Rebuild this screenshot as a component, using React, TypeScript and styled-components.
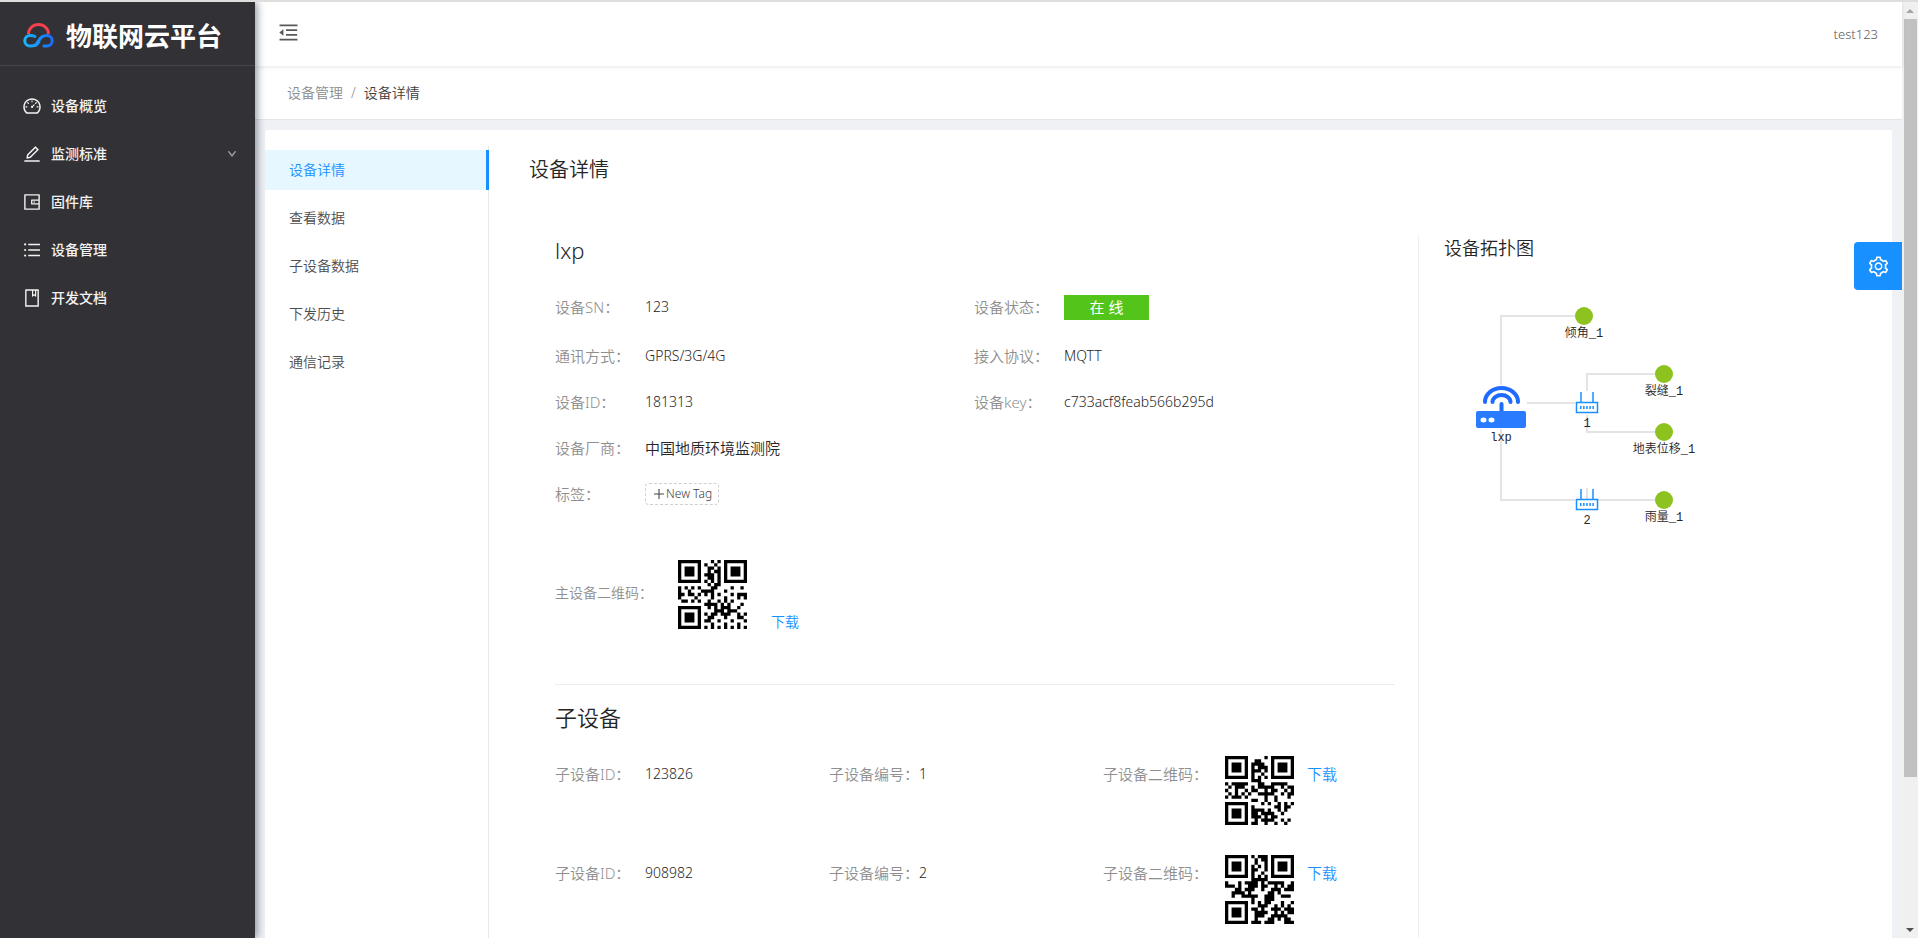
import React from 'react';
import styled, { createGlobalStyle } from 'styled-components';
import {
  AiOutlineBook,
  AiOutlineDashboard,
  AiOutlineDown,
  AiOutlineEdit,
  AiOutlineMenuFold,
  AiOutlinePlus,
  AiOutlineSetting,
  AiOutlineUnorderedList,
  AiOutlineWallet,
} from 'react-icons/ai';

const GlobalStyle = createGlobalStyle`
  *, *::before, *::after { box-sizing: border-box; }
  body {
    margin: 0;
    background: #f0f1f5;
    color: #262626;
    font-family: "Noto Sans", "Noto Sans CJK SC", sans-serif;
    font-size: 14px;
    font-weight: 350;
    line-height: 22px;
  }
  h1, h2, h3, p, ul, dl, dd, dt { margin: 0; padding: 0; font-weight: inherit; }
  ul { list-style: none; }
  a { text-decoration: none; color: inherit; }
  button { font: inherit; cursor: pointer; }
  svg { display: block; flex: none; }
`;

/* ---------- QR code (version 1, level M, numeric content) ---------- */

const SIZE = 21;
const DATA_WORDS = 16;
const EC_WORDS = 10;

const masks: Record<number, (r: number, c: number) => boolean> = {
  0: (r, c) => (r + c) % 2 === 0,
  2: (_r, c) => c % 3 === 0,
  4: (r, c) => (Math.floor(r / 2) + Math.floor(c / 3)) % 2 === 0,
};

const formats: Record<number, string> = {
  0: '101010000010010',
  2: '101111001111100',
  4: '100010111111001',
};

function gfMul(a: number, b: number) {
  let p = 0;
  while (b) {
    if (b & 1) p ^= a;
    a <<= 1;
    if (a & 256) a ^= 0x11d;
    b >>= 1;
  }
  return p;
}

function errorWords(data: number[]) {
  let gen = [1];
  let root = 1;
  for (let i = 0; i < EC_WORDS; i++) {
    const next = [...gen, 0];
    gen.forEach((g, j) => {
      next[j + 1] ^= gfMul(g, root);
    });
    gen = next;
    root = gfMul(root, 2);
  }
  const rem = [...data, ...Array(EC_WORDS).fill(0)];
  for (let i = 0; i < data.length; i++) {
    const f = rem[i];
    gen.forEach((g, j) => {
      rem[i + j] ^= gfMul(g, f);
    });
  }
  return rem.slice(data.length);
}

function qrMatrix(value: string, mask: number) {
  const bin = (n: number, len: number) => n.toString(2).padStart(len, '0');
  let bits = '0001' + bin(value.length, 10);
  for (let i = 0; i < value.length; i += 3) {
    const part = value.slice(i, i + 3);
    bits += bin(Number(part), part.length * 3 + 1);
  }
  bits += '0000';
  bits = bits.padEnd(Math.ceil(bits.length / 8) * 8, '0');
  const words = bits.match(/.{8}/g)!.map((b) => parseInt(b, 2));
  for (let pad = 0; words.length < DATA_WORDS; pad++) words.push(pad % 2 ? 0x11 : 0xec);
  const stream = [...words, ...errorWords(words)].map((w) => bin(w, 8)).join('');

  const m: (number | null)[][] = Array.from({ length: SIZE }, () => Array(SIZE).fill(null));
  const finder = (r0: number, c0: number) => {
    for (let r = -1; r < 8; r++)
      for (let c = -1; c < 8; c++) {
        if (m[r0 + r] === undefined || m[r0 + r][c0 + c] === undefined) continue;
        const d = Math.max(Math.abs(r - 3), Math.abs(c - 3));
        m[r0 + r][c0 + c] = d === 2 || d === 4 ? 0 : 1;
      }
  };
  finder(0, 0);
  finder(0, SIZE - 7);
  finder(SIZE - 7, 0);
  for (let i = 8; i < SIZE - 8; i++) m[6][i] = m[i][6] = i % 2 ? 0 : 1;

  const f = formats[mask].split('').map(Number);
  const around = [[8, 0], [8, 1], [8, 2], [8, 3], [8, 4], [8, 5], [8, 7], [8, 8], [7, 8], [5, 8], [4, 8], [3, 8], [2, 8], [1, 8], [0, 8]];
  around.forEach(([r, c], i) => (m[r][c] = f[i]));
  for (let i = 0; i < 7; i++) m[SIZE - 1 - i][8] = f[i];
  for (let i = 7; i < 15; i++) m[8][SIZE - 15 + i] = f[i];
  m[SIZE - 8][8] = 1;

  let k = 0;
  let up = true;
  for (let right = SIZE - 1; right > 0; right -= 2) {
    if (right === 6) right = 5;
    for (let n = 0; n < SIZE; n++) {
      const r = up ? SIZE - 1 - n : n;
      for (const c of [right, right - 1]) {
        if (m[r][c] !== null) continue;
        const bit = Number(stream[k++] ?? 0);
        m[r][c] = masks[mask](r, c) ? bit ^ 1 : bit;
      }
    }
    up = !up;
  }
  return m;
}

const QrSvg = styled.svg`
  width: 69px;
  height: 69px;
`;

function QrCode({ value, mask }: { value: string; mask: number }) {
  let d = '';
  qrMatrix(value, mask).forEach((row, r) => {
    for (let c = 0; c < SIZE; c++) {
      if (!row[c]) continue;
      const start = c;
      while (row[c + 1]) c++;
      d += `M${start} ${r}h${c - start + 1}v1h-${c - start + 1}z`;
    }
  });
  return (
    <QrSvg viewBox="0 0 21 21" role="img" aria-label={`二维码 ${value}`}>
      <path d={d} />
    </QrSvg>
  );
}

/* ---------- Frame ---------- */

const Frame = styled.div`
  display: flex;
  height: 100vh;
  overflow: hidden;
  border-top: 2px solid #dedede;
`;

const Sidebar = styled.aside`
  flex: none;
  width: 255px;
  background: #323135;
  box-shadow: 2px 0 8px rgba(0, 21, 41, 0.45);
  z-index: 2;
`;

const Brand = styled.h1`
  display: flex;
  align-items: center;
  gap: 11px;
  height: 64px;
  padding: 4px 0 0 22px;
  border-bottom: 1px solid #47464b;
  color: #fff;
  font-size: 26px;
  font-weight: 700;
  line-height: 40px;
`;

const SideMenu = styled.ul`
  padding-top: 20px;
`;

const SideLink = styled.a`
  display: flex;
  align-items: center;
  gap: 9px;
  height: 40px;
  margin-bottom: 8px;
  padding: 0 18px 0 22px;
  color: #f2f2f2;
  font-weight: 500;

  span { flex: 1; }
`;

const Main = styled.main`
  display: flex;
  flex: 1;
  flex-direction: column;
  min-width: 0;
`;

const Header = styled.header`
  display: flex;
  flex: none;
  align-items: center;
  justify-content: space-between;
  height: 64px;
  padding: 0 24px 0 22px;
  background: #fff;
  box-shadow: 0 1px 4px rgba(0, 21, 41, 0.1);
  z-index: 1;
`;

const FoldButton = styled.button`
  padding: 0 0 4px;
  border: 0;
  background: none;
  color: #595959;
`;

const UserName = styled.span`
  color: #595959;
  font-size: 13px;
`;

const Breadcrumb = styled.nav`
  display: flex;
  flex: none;
  align-items: center;
  gap: 8px;
  height: 54px;
  padding-left: 32px;
  border-bottom: 1px solid #e4e5e8;
  background: #fff;
  color: #8c8c8c;
`;

const Current = styled.span`
  color: #404040;
`;

const Card = styled.section`
  display: flex;
  flex: 1;
  min-height: 0;
  margin: 10px 10px 0;
  padding-top: 16px;
  border-radius: 2px 2px 0 0;
  background: #fff;
`;

const Tabs = styled.ul`
  flex: none;
  width: 224px;
  padding-top: 4px;
  border-right: 1px solid #e8e8e8;
`;

const TabLink = styled.a<{ $active?: boolean }>`
  display: flex;
  align-items: center;
  height: 40px;
  margin: 0 -1px 8px 0;
  padding-left: 24px;
  border-right: ${(p) => (p.$active ? '3px solid #1890ff' : '0')};
  background: ${(p) => (p.$active ? '#e6f7ff' : 'transparent')};
  color: ${(p) => (p.$active ? '#1890ff' : '#4d4d4d')};
`;

const Content = styled.div`
  flex: 1;
  min-width: 0;
  padding: 8px 0 0 40px;
`;

const PageTitle = styled.h2`
  font-size: 20px;
  line-height: 32px;
`;

const Columns = styled.div`
  display: flex;
  margin-top: 49px;
`;

const Details = styled.div`
  flex: 1;
  padding-left: 26px;
`;

const Topology = styled.div`
  flex: none;
  width: 474px;
  height: 800px;
  margin-left: 23px;
  padding-left: 25px;
  border-left: 1px solid #f0f0f0;
`;

const TopologyTitle = styled.h3`
  font-size: 18px;
  line-height: 26px;
`;

const BlockTitle = styled.h3`
  font-size: 22px;
  line-height: 30px;
`;

const Facts = styled.dl`
  display: grid;
  grid-template-columns: 1fr 1fr;
  grid-template-rows: 50px 47px;
  grid-auto-rows: 46px;
  margin: 17px 2px 0 0;
  font-size: 15px;
`;

const Fact = styled.div<{ $wide?: boolean }>`
  display: flex;
  align-items: center;
  grid-column: ${(p) => (p.$wide ? '1 / -1' : 'auto')};
`;

const Label = styled.dt<{ $width?: number }>`
  flex: none;
  width: ${(p) => p.$width ?? 90}px;
  color: #8f8f8f;
`;

const Value = styled.dd<{ $latin?: boolean }>`
  font-size: ${(p) => (p.$latin ? 14 : 15)}px;
`;

const Online = styled.dd`
  width: 85px;
  height: 25px;
  background: #52c41a;
  color: #fff;
  font-weight: 400;
  line-height: 25px;
  text-align: center;
`;

const NewTag = styled.button`
  display: flex;
  align-items: center;
  height: 22px;
  padding: 0 6px;
  border: 1px dashed #d0d0d0;
  border-radius: 4px;
  background: #fff;
  color: #404040;
  font-size: 12px;
`;

const MainQr = styled.div`
  display: flex;
  align-items: center;
  height: 69px;
  margin-top: 43px;
`;

const MainQrLabel = styled.span`
  width: 123px;
  padding-bottom: 4px;
  color: #8f8f8f;
`;

const Download = styled.a<{ $low?: boolean }>`
  align-self: ${(p) => (p.$low ? 'flex-end' : 'flex-start')};
  margin-left: ${(p) => (p.$low ? 24 : 13)}px;
  padding-top: ${(p) => (p.$low ? 0 : 7)}px;
  color: #1890ff;
  line-height: ${(p) => (p.$low ? 14 : 22)}px;
`;

const Divider = styled.hr`
  height: 1px;
  margin: 55px 0 17px;
  border: 0;
  background: #ececec;
`;

const SubDevice = styled.dl`
  display: grid;
  grid-template-columns: 274fr 274fr 290fr;
  height: 69px;
  margin: 24px 2px 30px 0;
  font-size: 15px;
`;

const SubFact = styled.div`
  display: flex;
  align-items: flex-start;
  padding-top: 7px;
`;

const SubQr = styled.div`
  display: flex;

  dt { padding-top: 7px; }
  dd { display: flex; }
`;

/* ---------- Scroll bar and settings ---------- */

const ScrollTrack = styled.div`
  display: flex;
  flex: none;
  flex-direction: column;
  align-items: center;
  width: 16px;
  background: #f0f0f0;
`;

const ScrollRail = styled.div`
  flex: 1;
  width: 13px;
`;

const ScrollThumb = styled.div`
  height: 84%;
  background: #c1c1c1;
`;

const ScrollArrow = styled.div<{ $down?: boolean }>`
  display: flex;
  align-items: center;
  height: 17px;
  color: ${(p) => (p.$down ? '#505050' : '#a3a3a3')};
`;

const SettingsButton = styled.button`
  position: fixed;
  top: 242px;
  right: 16px;
  z-index: 3;
  display: flex;
  align-items: center;
  justify-content: center;
  width: 48px;
  height: 48px;
  padding: 0;
  border: 0;
  border-radius: 4px 0 0 4px;
  background: #1890ff;
  color: #fff;
`;

/* ---------- Drawings ---------- */

function CloudLogo() {
  return (
    <svg width="33" height="25" viewBox="0 0 33 25" fill="none" strokeWidth="3" strokeLinecap="round">
      <defs>
        <linearGradient id="cloudBlue" x1="0" x2="1">
          <stop offset="0" stopColor="#19b5fe" />
          <stop offset="1" stopColor="#1a6dff" />
        </linearGradient>
      </defs>
      <path d="M6.500 11a10 9.500 0 0 1 20 0" stroke="#f5424e" strokeLinecap="butt" />
      <path
        d="M13 13.500C11.500 12.500 10 12.500 8 12.500a5.200 5.200 0 0 0 0 10.500c5 0 6.500-1 8.500-5s4-5.500 8.500-5.500a5.200 5.200 0 0 1 0 10.500h-3M13.500 22.500c2-1 2.500-2 3.500-4"
        stroke="url(#cloudBlue)"
      />
    </svg>
  );
}

const TopologySvg = styled.svg`
  margin: 40px 0 0 21px;
  overflow: visible;

  text {
    fill: #262626;
    font-family: "Liberation Mono", "Noto Sans CJK SC", monospace;
    font-size: 12px;
    text-anchor: middle;
  }
`;

const sensors = [
  { x: 119, y: 15, name: '倾角_1' },
  { x: 199, y: 73, name: '裂缝_1' },
  { x: 199, y: 131, name: '地表位移_1' },
  { x: 199, y: 199, name: '雨量_1' },
];

const hubs = [
  { x: 122, y: 91, name: '1' },
  { x: 122, y: 188, name: '2' },
];

function TopologyMap() {
  return (
    <TopologySvg width="240" height="230" viewBox="0 0 240 230">
      <path
        d="M36 84V15H110M36 128V199H110M62 102H110M122 90V73H190M122 114V131H190M122 187V199M133 199H190"
        fill="none"
        stroke="#e4e4e4"
        strokeWidth="2"
      />
      <g stroke="#1f6bff" fill="none" strokeWidth="4" strokeLinecap="round">
        <path d="M20 101a16.500 14 0 0 1 33 0" />
        <path d="M27.500 101a9 7 0 0 1 18 0" />
        <path d="M36.500 103v9" />
      </g>
      <rect x="11" y="110" width="50" height="17" rx="2" fill="#2a7bff" />
      <ellipse cx="18.500" cy="119" rx="3" ry="2.500" fill="#fff" />
      <ellipse cx="26.500" cy="119" rx="3" ry="2.500" fill="#fff" />
      <text x="36" y="140">lxp</text>
      {hubs.map((h) => (
        <g key={h.name}>
          <path d={`M${h.x - 6} ${h.y}v11M${h.x + 6} ${h.y}v11`} stroke="#1890ff" strokeWidth="1.500" />
          <rect x={h.x - 10.5} y={h.y + 10.5} width="21" height="10" fill="#fff" stroke="#1890ff" strokeWidth="1.500" />
          <path d={`M${h.x - 7} ${h.y + 15.5}h14`} stroke="#1890ff" strokeWidth="3" strokeDasharray="1.500 1.600" />
          <text x={h.x} y={h.y + 35}>{h.name}</text>
        </g>
      ))}
      {sensors.map((s) => (
        <g key={s.name}>
          <circle cx={s.x} cy={s.y} r="9" fill="#8dc21f" />
          <text x={s.x} y={s.y + 21}>{s.name}</text>
        </g>
      ))}
    </TopologySvg>
  );
}

const sideItems = [
  { icon: AiOutlineDashboard, text: '设备概览' },
  { icon: AiOutlineEdit, text: '监测标准', open: true },
  { icon: AiOutlineWallet, text: '固件库' },
  { icon: AiOutlineUnorderedList, text: '设备管理' },
  { icon: AiOutlineBook, text: '开发文档' },
];

const tabs = ['设备详情', '查看数据', '子设备数据', '下发历史', '通信记录'];

const subDevices = [
  { id: '123826', no: '1', mask: 2 },
  { id: '908982', no: '2', mask: 4 },
];

export default function App() {
  return (
    <>
      <GlobalStyle />
      <Frame>
        <Sidebar>
          <Brand>
            <CloudLogo />
            物联网云平台
          </Brand>
          <SideMenu>
            {sideItems.map(({ icon: Icon, text, open }) => (
              <li key={text}>
                <SideLink href="#">
                  <Icon size={20} />
                  <span>{text}</span>
                  {open && <AiOutlineDown size={10} strokeWidth={80} color="#a0a0a4" />}
                </SideLink>
              </li>
            ))}
          </SideMenu>
        </Sidebar>
        <Main>
          <Header>
            <FoldButton aria-label="收起菜单">
              <AiOutlineMenuFold size={23} />
            </FoldButton>
            <UserName>test123</UserName>
          </Header>
          <Breadcrumb>
            <a href="#">设备管理</a>
            <span>/</span>
            <Current>设备详情</Current>
          </Breadcrumb>
          <Card>
            <Tabs>
              {tabs.map((t, i) => (
                <li key={t}>
                  <TabLink href="#" $active={i === 0}>{t}</TabLink>
                </li>
              ))}
            </Tabs>
            <Content>
              <PageTitle>设备详情</PageTitle>
              <Columns>
                <Details>
                  <BlockTitle>lxp</BlockTitle>
                  <Facts>
                    <Fact><Label>设备SN：</Label><Value $latin>123</Value></Fact>
                    <Fact><Label>设备状态：</Label><Online>在 线</Online></Fact>
                    <Fact><Label>通讯方式：</Label><Value $latin>GPRS/3G/4G</Value></Fact>
                    <Fact><Label>接入协议：</Label><Value $latin>MQTT</Value></Fact>
                    <Fact><Label>设备ID：</Label><Value $latin>181313</Value></Fact>
                    <Fact><Label>设备key：</Label><Value $latin>c733acf8feab566b295d</Value></Fact>
                    <Fact $wide><Label>设备厂商：</Label><Value>中国地质环境监测院</Value></Fact>
                    <Fact $wide>
                      <Label>标签：</Label>
                      <dd><NewTag><AiOutlinePlus size={14} />New Tag</NewTag></dd>
                    </Fact>
                  </Facts>
                  <MainQr>
                    <MainQrLabel>主设备二维码：</MainQrLabel>
                    <QrCode value="181313" mask={0} />
                    <Download href="#" $low>下载</Download>
                  </MainQr>
                  <Divider />
                  <BlockTitle>子设备</BlockTitle>
                  {subDevices.map((s) => (
                    <SubDevice key={s.id}>
                      <SubFact><Label>子设备ID：</Label><Value $latin>{s.id}</Value></SubFact>
                      <SubFact><Label>子设备编号：</Label><Value $latin>{s.no}</Value></SubFact>
                      <SubQr>
                        <Label $width={122}>子设备二维码：</Label>
                        <dd>
                          <QrCode value={s.id} mask={s.mask} />
                          <Download href="#">下载</Download>
                        </dd>
                      </SubQr>
                    </SubDevice>
                  ))}
                </Details>
                <Topology>
                  <TopologyTitle>设备拓扑图</TopologyTitle>
                  <TopologyMap />
                </Topology>
              </Columns>
            </Content>
          </Card>
        </Main>
        <ScrollTrack aria-hidden="true">
          <ScrollArrow>
            <svg width="8" height="4" viewBox="0 0 8 4"><path d="M0 4L4 0L8 4z" fill="currentColor" /></svg>
          </ScrollArrow>
          <ScrollRail><ScrollThumb /></ScrollRail>
          <ScrollArrow $down>
            <svg width="8" height="4" viewBox="0 0 8 4"><path d="M0 0L4 4L8 0z" fill="currentColor" /></svg>
          </ScrollArrow>
        </ScrollTrack>
      </Frame>
      <SettingsButton aria-label="设置">
        <AiOutlineSetting size={23} />
      </SettingsButton>
    </>
  );
}
